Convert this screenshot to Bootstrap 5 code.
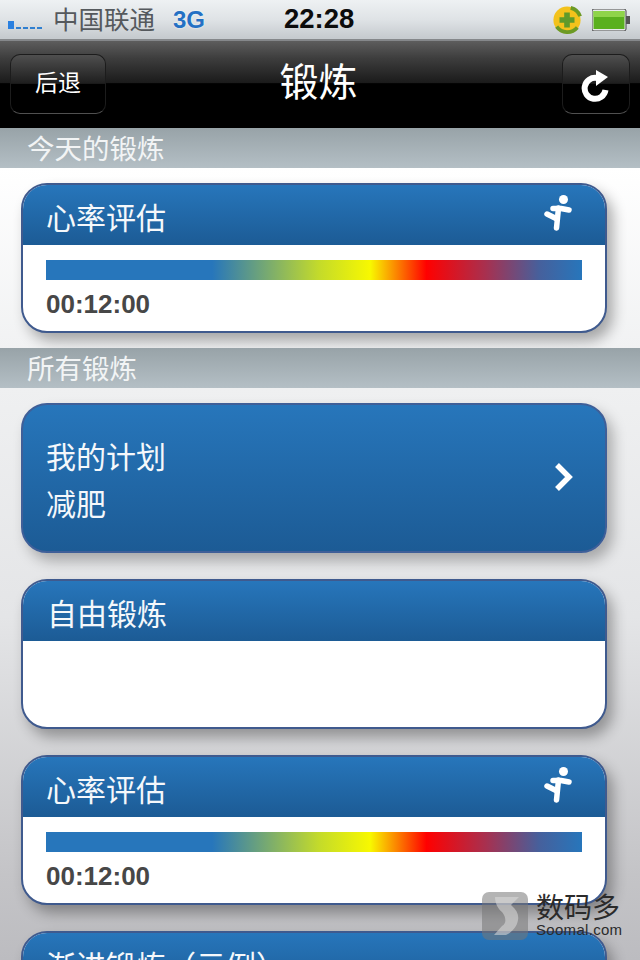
<!DOCTYPE html>
<html lang="zh">
<head>
<meta charset="utf-8">
<title>锻炼</title>
<link href="https://cdn.jsdelivr.net/npm/bootstrap@5.3.0/dist/css/bootstrap.min.css" rel="stylesheet">
<style>
html,body{margin:0;height:960px;overflow:hidden;}
body{font-family:"Noto Sans CJK SC","Liberation Sans",sans-serif;background:#eee;}
.phone{width:640px;height:960px;overflow:hidden;position:relative;}
.statusbar{height:41px;background:linear-gradient(#eef1f3,#dfe3e6 50%,#c6cbcf 96%);border-bottom:2px solid #85888b;padding:0 10px 0 8px;}
.bars{width:40px;gap:2px;margin-top:10px;}
.bars i{display:block;width:5px;height:2px;background:#2f7fd0;}
.bars i:first-child{height:8px;width:6px;background:#2a80e0;}
.carrier{font-size:25.5px;color:#55595d;line-height:38px;margin:-4px 0 0 5px;}
.net{font:bold 24px/38px "Liberation Sans",sans-serif;color:#2470c4;margin-left:18px;text-shadow:0 0 2px #fff;}
.clock{font:bold 27.5px/38px "Liberation Sans",sans-serif;color:#0c0c0c;position:absolute;left:284px;top:0;}
.statusicons{gap:10px;}
.topbar{height:87px;background:linear-gradient(#5d5d5d 0,#3d3d3d 20%,#1b1b1b 48%,#000 49%,#000 100%);padding:13px 10px 0;}
.navbtn{height:60px;border:1px solid #1c1c1c;border-bottom-color:#505050;border-radius:10px;background:linear-gradient(#4f4f4f,#1e1e1e 49%,#000 50%);color:#fff;display:flex;align-items:center;justify-content:center;}
.backbtn{width:96px;font-size:23px;padding-bottom:6px;}
.refreshbtn{width:68px;}
.navtitle{font-size:39px;color:#fff;line-height:56px;position:absolute;left:-3px;right:0;top:51px;text-align:center;}
.sect{height:40px;background:linear-gradient(#98a3a8,#b4bfc5);color:#f2f4f5;font-size:27.5px;line-height:38px;padding-left:27px;white-space:nowrap;}
.today{height:180px;background:linear-gradient(#fff,#f1f2f3);padding:15px 33px 0 21px;}
.allarea{height:572px;background:linear-gradient(#eff0f1,#e4e5e7 40%,#c4c4c7 85%,#bcbcc0);padding:15px 33px 0 21px;}
.wk{border:2px solid #3f5a8e;border-radius:26px;overflow:hidden;background:#fff;box-shadow:6px 8px 14px rgba(0,0,0,.32);margin-bottom:26px;}
.wkhead{height:60px;background:linear-gradient(#2776bb,#1c5b95);color:#f5f8fb;font-size:30px;line-height:62px;padding-left:23px;display:flex;justify-content:space-between;white-space:nowrap;}
.wkhead svg{margin:8px 31px 0 0;}
.wkbody{height:86px;padding:15px 23px 0 23px;}
.hr-strip{height:20px;background:linear-gradient(90deg,#2776bb 0,#2776bb 31%,#c4db2a 51%,#f8f800 60.5%,#ff0000 71%,#a8304f 82%,#46609c 92%,#2776bb 100%);}
.dur{font:bold 26px/30px "Liberation Sans",sans-serif;color:#474747;margin-top:9px;}
.plan{height:150px;border-radius:26px;background:linear-gradient(#2776bb,#1c5b95);border:2px solid #3f5f98;color:#f5f8fb;font-size:30px;line-height:47px;padding-left:23px;padding-top:2px;margin-bottom:26px;box-shadow:6px 8px 14px rgba(0,0,0,.28);}
.plan svg{margin:-5px 29px 0 0;}
.free .wkhead{padding-left:24px;}
.wm{position:absolute;left:482px;top:892px;width:150px;height:50px;}
.wmlogo{position:absolute;left:0;top:0;}
.wmcn{position:absolute;left:54px;top:-1px;font-size:28px;line-height:30px;color:#2b2b2b;white-space:nowrap;}
.wmen{position:absolute;left:54px;top:30px;font:15px/16px "Liberation Sans",sans-serif;letter-spacing:.3px;color:#2b2b2b;white-space:nowrap;}
</style>
</head>
<body>
<div class="phone">
  <div class="statusbar d-flex align-items-center justify-content-between position-relative">
    <div class="d-flex align-items-center">
      <div class="bars d-flex align-items-end"><i></i><i></i><i></i><i></i><i></i></div>
      <span class="carrier">中国联通</span>
      <span class="net">3G</span>
    </div>
    <span class="clock">22:28</span>
    <div class="d-flex align-items-center statusicons">
      <svg width="30" height="30" viewBox="0 0 32 32"><circle cx="16" cy="16" r="14.5" fill="#f3c21c"/><path d="M5 23a14 14 0 0 0 22 1" fill="none" stroke="#6c9a24" stroke-width="4"/><path d="M20 3a14 14 0 0 1 10 9" fill="none" stroke="#6c9a24" stroke-width="4"/><path d="M13 8h6v5h5v6h-5v5h-6v-5H8v-6h5z" fill="#5f9a2a"/></svg>
      <svg width="38" height="22" viewBox="0 0 38 22"><rect x="0" y="0" width="34" height="22" rx="2" fill="#e8eaeb" stroke="#444"/><rect x="1.5" y="2" width="31" height="18" fill="#5ab01e"/><rect x="1.5" y="2" width="31" height="6" fill="#8fd44a"/><rect x="34" y="7" width="4" height="8" fill="#555"/></svg>
    </div>
  </div>
  <div class="topbar d-flex justify-content-between align-items-start">
    <div class="navbtn backbtn">后退</div>
    <div class="navbtn refreshbtn">
      <svg width="32" height="36" viewBox="0 0 32 36"><path d="M17 12A10.5 10.5 0 1 0 25.500 24" fill="none" stroke="#fff" stroke-width="6"/><path d="M16 4l12 7-12 9z" fill="#fff"/></svg>
    </div>
  </div>
  <div class="navtitle">锻炼</div>

  <div class="sect">今天的锻炼</div>
  <div class="today">
    <div class="wk">
      <div class="wkhead">心率评估
        <svg width="30" height="38" viewBox="0 0 30 38"><circle cx="19.500" cy="6.500" r="4.500" fill="#fff"/><path d="M9 15.500h8l8 1.500" fill="none" stroke="#fff" stroke-width="5.500" stroke-linecap="round" stroke-linejoin="round"/><path d="M14.500 15l-2 20" fill="none" stroke="#fff" stroke-width="5.500" stroke-linecap="round"/><path d="M3 21l10 5" fill="none" stroke="#fff" stroke-width="5.500" stroke-linecap="round"/></svg>
      </div>
      <div class="wkbody"><div class="hr-strip"></div><div class="dur">00:12:00</div></div>
    </div>
  </div>

  <div class="sect">所有锻炼</div>
  <div class="allarea">
    <div class="plan d-flex align-items-center justify-content-between">
      <div>我的计划<br>减肥</div>
      <svg width="24" height="30" viewBox="0 0 24 30"><path d="M5 3l12 12L5 27" fill="none" stroke="#fff" stroke-width="5.500"/></svg>
    </div>
    <div class="wk free">
      <div class="wkhead">自由锻炼</div>
      <div class="wkbody"></div>
    </div>
    <div class="wk">
      <div class="wkhead">心率评估
        <svg width="30" height="38" viewBox="0 0 30 38"><circle cx="19.500" cy="6.500" r="4.500" fill="#fff"/><path d="M9 15.500h8l8 1.500" fill="none" stroke="#fff" stroke-width="5.500" stroke-linecap="round" stroke-linejoin="round"/><path d="M14.500 15l-2 20" fill="none" stroke="#fff" stroke-width="5.500" stroke-linecap="round"/><path d="M3 21l10 5" fill="none" stroke="#fff" stroke-width="5.500" stroke-linecap="round"/></svg>
      </div>
      <div class="wkbody"><div class="hr-strip"></div><div class="dur">00:12:00</div></div>
    </div>
    <div class="wk">
      <div class="wkhead">渐进锻炼（示例）</div>
      <div class="wkbody"></div>
    </div>
  </div>

  <div class="wm">
    <svg class="wmlogo" width="46" height="48" viewBox="0 0 46 48"><rect width="46" height="48" rx="7" fill="#777" opacity=".55"/><path d="M13 5h24l-8 8c6 5 8 10 7 15-1 7-7 13-12 15H12l8-9c5-3 4-9 0-14C16 17 13 11 13 5z" fill="#ddd" opacity=".55"/></svg>
    <div class="wmcn">数码多</div>
    <div class="wmen">Soomal.com</div>
  </div>
</div>
<script src="https://cdn.jsdelivr.net/npm/bootstrap@5.3.0/dist/js/bootstrap.bundle.min.js"></script>
</body>
</html>
